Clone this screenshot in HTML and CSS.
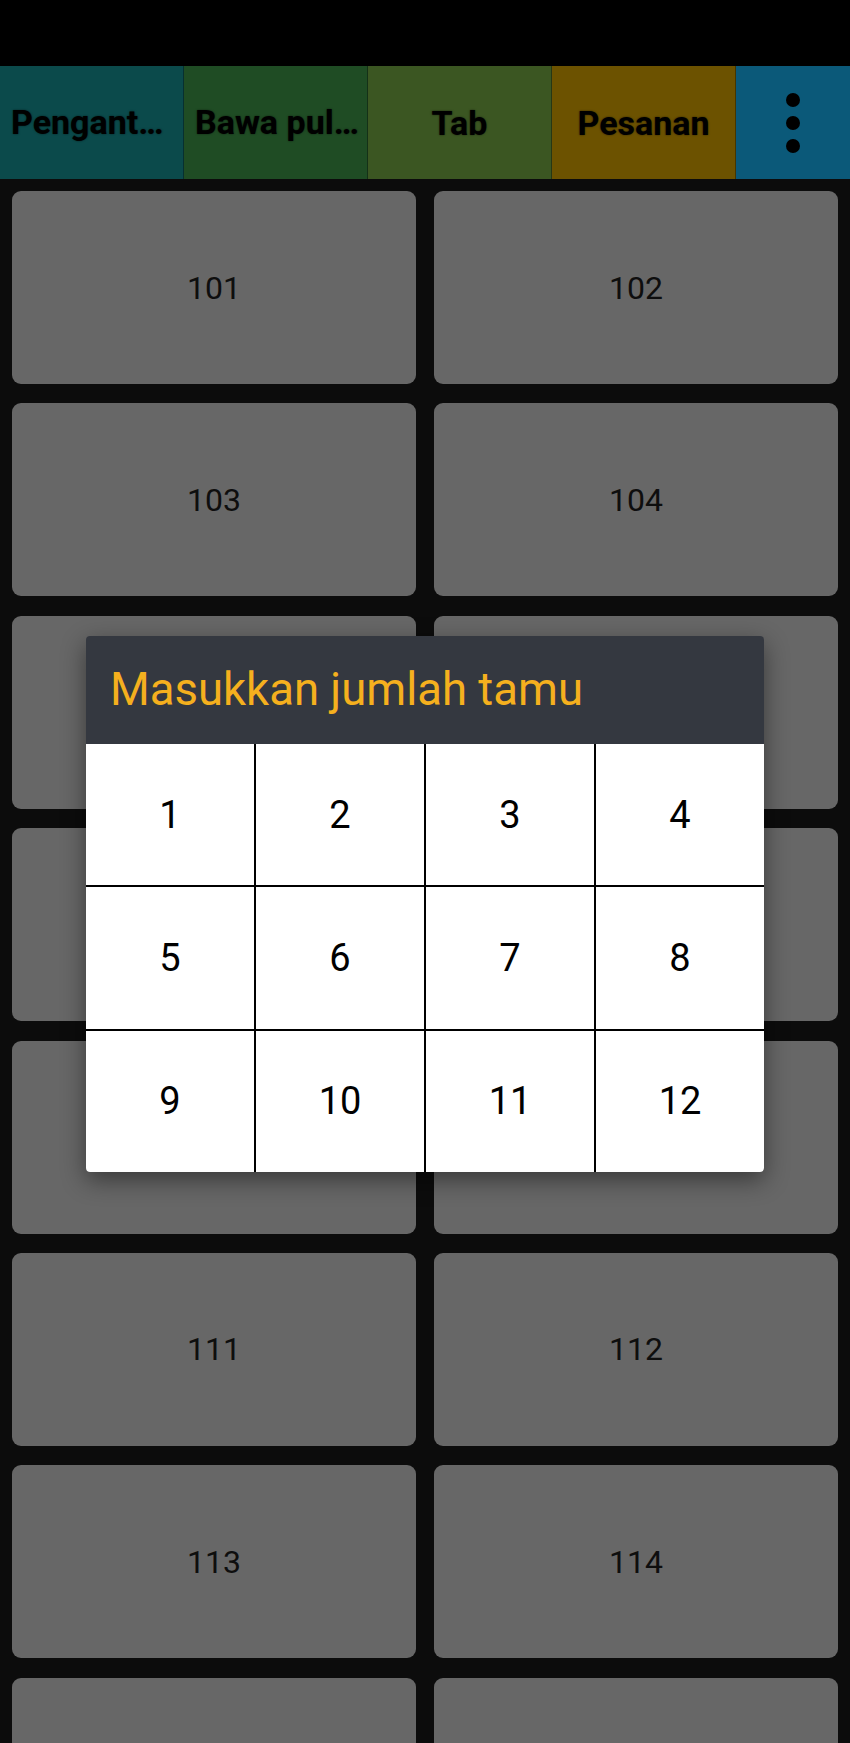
FILE: index.html
```html
<!DOCTYPE html>
<html lang="en">
<head>
    <meta charset="UTF-8">
    <meta name="viewport" content="width=device-width, initial-scale=1.0">
    <title>Meja</title>
    <link rel="stylesheet" href="styles.css">
</head>
<body>
    <div class="status-bar"></div>
    <div class="tab-bar">
        <div class="tab tab-delivery">Pengantaran</div>
        <div class="tab tab-takeaway">Bawa pulang</div>
        <div class="tab tab-tab">Tab</div>
        <div class="tab tab-order">Pesanan</div>
        <div class="tab tab-menu">
            <span class="dot"></span>
            <span class="dot"></span>
            <span class="dot"></span>
        </div>
    </div>
    <div class="table-grid">
        <div class="table">101</div>
        <div class="table">102</div>
        <div class="table">103</div>
        <div class="table">104</div>
        <div class="table">105</div>
        <div class="table">106</div>
        <div class="table">107</div>
        <div class="table">108</div>
        <div class="table">109</div>
        <div class="table">110</div>
        <div class="table">111</div>
        <div class="table">112</div>
        <div class="table">113</div>
        <div class="table">114</div>
        <div class="table">115</div>
        <div class="table">116</div>
    </div>

    <div class="dialog">
        <div class="dialog-title">Masukkan jumlah tamu</div>
        <div class="guest-grid">
            <div class="guest">1</div>
            <div class="guest">2</div>
            <div class="guest">3</div>
            <div class="guest">4</div>
            <div class="guest">5</div>
            <div class="guest">6</div>
            <div class="guest">7</div>
            <div class="guest">8</div>
            <div class="guest">9</div>
            <div class="guest">10</div>
            <div class="guest">11</div>
            <div class="guest">12</div>
        </div>
    </div>
</body>
</html>
```

FILE: styles.css
```css
body {
    margin: 0;
    width: 850px;
    height: 1743px;
    overflow: hidden;
    background: #0c0c0c;
    font-family: Roboto, "Liberation Sans", sans-serif;
    position: relative;
}
.status-bar {
    height: 66px;
    background: #000;
}
.tab-bar {
    display: flex;
    height: 113px;
}
.tab {
    width: 184px;
    box-sizing: border-box;
    padding: 0 10px;
    display: flex;
    align-items: center;
    justify-content: center;
    font-size: 34px;
    font-weight: bold;
    color: #000;
    text-shadow: 0 0 2px rgba(0, 0, 0, 0.6);
    border-right: 1px solid rgba(0, 0, 0, 0.35);
    overflow: hidden;
}
.tab-delivery, .tab-takeaway {
    display: block;
    line-height: 113px;
    white-space: nowrap;
    text-overflow: ellipsis;
    padding: 0 8px 0 11px;
}
.tab-delivery { background: #0b4a4b; }
.tab-takeaway { background: #1f4c24; }
.tab-tab { background: #3b5622; }
.tab-order { background: #6c5200; }
.tab-menu {
    flex: 1;
    background: #0b5979;
    border-right: none;
    flex-direction: column;
    gap: 9px;
}
.dot {
    width: 14px;
    height: 14px;
    border-radius: 50%;
    background: #000;
}
.table-grid {
    display: grid;
    grid-template-columns: 1fr 1fr;
    column-gap: 18px;
    row-gap: 19.4px;
    padding: 12px;
}
.table {
    height: 193px;
    border-radius: 9px;
    background: #676767;
    display: flex;
    align-items: center;
    justify-content: center;
    font-size: 32px;
    color: #0e0e0e;
}
.dialog {
    position: absolute;
    left: 86px;
    top: 636px;
    width: 678px;
    border-radius: 4px;
    overflow: hidden;
    box-shadow: 0 8px 24px rgba(0, 0, 0, 0.45);
}
.dialog-title {
    height: 108px;
    box-sizing: border-box;
    padding: 0 24px 2px;
    display: flex;
    align-items: center;
    background: #343840;
    color: #f5b01e;
    font-size: 45.5px;
}
.guest-grid {
    display: grid;
    grid-template-columns: repeat(4, 1fr);
    gap: 2px;
    background: #000;
}
.guest {
    height: 141.4px;
    background: #fff;
    display: flex;
    align-items: center;
    justify-content: center;
    font-size: 38px;
    color: #000;
}
```
